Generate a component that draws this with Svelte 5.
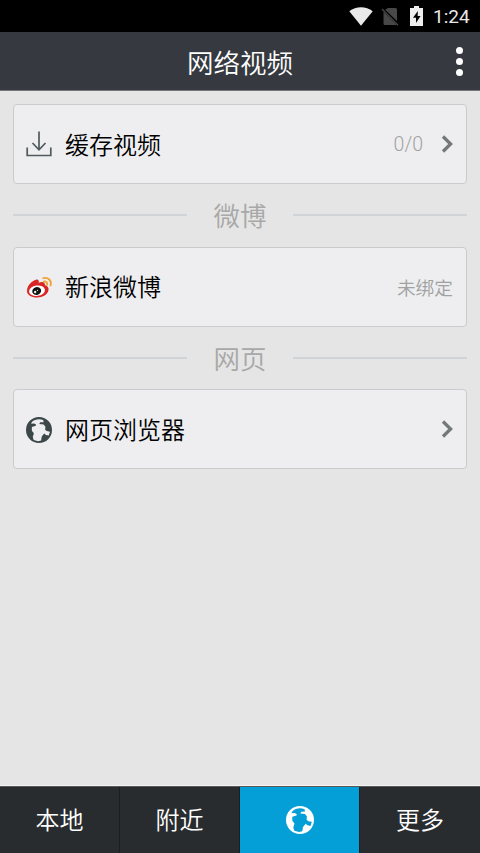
<script>
	const tabs = [
		{ id: "local", label: "本地" },
		{ id: "nearby", label: "附近" },
		{ id: "web", label: "" },
		{ id: "more", label: "更多" },
	];
	let active = $state("web");
</script>

{#snippet globe()}
	<svg class="globe" viewBox="0 0 28 28">
		<path
			fill="currentColor"
			fill-rule="evenodd"
			d="M14 0a14 14 0 1 0 0 28a14 14 0 1 0 0-28zM6.500 5.200C9 2.500 14.500 1.400 18.500 3.300L19 5.600L15.300 5.700L14.300 7.500L19 8L20.900 10.500L20.600 13.700L22.300 15.200L25.800 15.800L24.500 20L21.500 19.300L19.700 17.700L18.200 19.500L16.900 21.300L16.300 25.200L13 26L8.300 24.700L7.300 21.500L8.500 17.500L6.300 14.700L6.300 10.800L10.500 9.500L10.800 8.200L8.700 7L5.500 7.300z"
		/>
	</svg>
{/snippet}

{#snippet chevron()}
	<svg class="chevron" viewBox="0 0 12 18">
		<path d="M2 1.500l7.600 7.500L2 16.500" fill="none" stroke="#737879" stroke-width="3.300" />
	</svg>
{/snippet}

<div class="screen">
	<div class="status">
		<svg class="wifi" viewBox="0 0 24 19">
			<path d="M.3 4.200C7-1 17-1 23.700 4.200L12 18.700z" fill="#e9e9e9" />
		</svg>
		<svg class="sim" viewBox="0 0 18 19">
			<path d="M7 1h7.500q1.500 0 1.500 1.500V14L4.200 2.800zM2.500 4.700L15.700 18H4q-1.500 0-1.500-1.500z" fill="#484848" />
			<path d="M1 2l16 16.300" stroke="#484848" stroke-width="1.300" />
		</svg>
		<svg class="battery" viewBox="0 0 13 20">
			<path d="M4 0h5v2h4v18H0V2h4z" fill="#eee" />
			<path d="M7.800 5L3 11.700h3V17l4.600-7H7.700z" fill="#000" />
		</svg>
		<span class="clock">1:24</span>
	</div>

	<header>
		<h1>网络视频</h1>
		<button class="menu" aria-label="menu"><i></i><i></i><i></i></button>
	</header>

	<main>
		<div class="card">
			<svg class="icon" viewBox="0 0 26 26" fill="none" stroke="#4f5a5c" stroke-width="1.700">
				<path d="M13 0.500v18M6.500 12l6.500 6.800 6.500-6.800M1.200 16.500v8h23.600v-8" />
			</svg>
			<span class="name">缓存视频</span>
			<span class="count">0/0</span>
			{@render chevron()}
		</div>

		<div class="divider"><span>微博</span></div>

		<div class="card">
			<svg class="icon" viewBox="0 0 26 26">
				<path
					d="M1 17C1 11.500 6 6.700 10 5.700c2.500-.5 3.200 1 2.700 3 3-1.300 6.600-1.200 6.200 2.300 2.700 1 4.300 2.800 3.500 5.500C21.500 20.500 17 23.500 11 23.500 5.500 23.500 1 21 1 17z"
					fill="#d92525"
				/>
				<ellipse cx="11" cy="16.700" rx="8" ry="5.200" fill="#fff" transform="rotate(-7 11 16.700)" />
				<ellipse cx="10.700" cy="17" rx="4.500" ry="3.900" fill="#111" transform="rotate(-15 10.700 17)" />
				<circle cx="9.200" cy="18" r="1.200" fill="#eee" />
				<circle cx="11.500" cy="16.300" r=".6" fill="#eee" />
				<path
					d="M17.300 4.100c5-1.200 8.600 2.400 7.200 7.400M17.600 7.600c2.500-.5 4 1 3.400 3.200"
					fill="none"
					stroke="#eda334"
					stroke-width="1.900"
					stroke-linecap="round"
				/>
			</svg>
			<span class="name">新浪微博</span>
			<span class="state">未绑定</span>
		</div>

		<div class="divider"><span>网页</span></div>

		<div class="card">
			<span class="icon">{@render globe()}</span>
			<span class="name">网页浏览器</span>
			{@render chevron()}
		</div>
	</main>

	<nav>
		{#each tabs as tab (tab.id)}
			<button class:active={active === tab.id} aria-label={tab.id} onclick={() => (active = tab.id)}>
				{#if tab.id === "web"}
					{@render globe()}
				{:else}
					<span>{tab.label}</span>
				{/if}
			</button>
		{/each}
	</nav>
</div>

<style>
	.screen {
		height: 100vh;
		display: flex;
		flex-direction: column;
		background: #e5e5e5;
		font-family: Roboto, "Noto Sans CJK SC", sans-serif;
		font-weight: 350;
		overflow: hidden;
	}

	svg {
		display: block;
		flex: none;
	}

	button {
		border: 0;
		padding: 0;
		background: none;
		color: inherit;
		font: inherit;
	}

	.status {
		flex: none;
		height: 32px;
		box-sizing: border-box;
		padding-right: 11px;
		display: flex;
		align-items: center;
		justify-content: flex-end;
		background: #000;
		color: #e9e9e9;
	}

	.wifi {
		width: 24px;
		height: 19px;
		margin-right: 8px;
	}

	.sim {
		width: 18px;
		height: 19px;
		margin-right: 11px;
	}

	.battery {
		width: 13px;
		height: 20px;
		margin-right: 10px;
	}

	.clock {
		width: 36px;
		font-size: 19px;
		font-weight: 400;
		line-height: 32px;
		padding-top: 2px;
	}

	header {
		flex: none;
		height: 59px;
		box-sizing: border-box;
		display: grid;
		grid-template-columns: 40px 1fr 40px;
		align-items: center;
		background: #363a40;
		border-bottom: 1px solid #74777a;
		color: #fff;
	}

	h1 {
		grid-column: 2;
		margin: 0;
		padding-top: 5px;
		font-size: 26.5px;
		font-weight: inherit;
		line-height: 53px;
		text-align: center;
	}

	.menu {
		display: flex;
		flex-direction: column;
		align-items: center;
		gap: 4px;
		padding-right: 2px;
	}

	.menu i {
		width: 7px;
		height: 7px;
		border-radius: 50%;
		background: #fff;
	}

	main {
		flex: 1;
		padding: 13px 13px 0;
	}

	.card {
		height: 80px;
		box-sizing: border-box;
		padding: 0 13px 0 12px;
		display: flex;
		align-items: center;
		background: #eeeef0;
		border: 1px solid #c8cccf;
		border-radius: 4px;
	}

	.icon {
		width: 26px;
		height: 26px;
		margin-right: 13px;
		color: #3b4749;
	}

	.icon .globe {
		width: 26px;
		height: 26px;
		margin-top: 1px;
	}

	.name {
		flex: 1;
		padding-bottom: 2px;
		font-size: 24px;
		color: #000;
	}

	.count,
	.state {
		font-size: 18.700px;
		color: #a0a2a2;
	}

	.state {
		padding-bottom: 1px;
	}

	.count {
		font-weight: 300;
		font-size: 19.500px;
		margin-right: 18px;
	}

	.chevron {
		width: 12px;
		height: 18px;
	}

	.divider {
		height: 62.500px;
		display: flex;
		align-items: center;
		font-size: 26.500px;
		color: #a8a8a8;
	}

	.divider::before,
	.divider::after {
		content: "";
		flex: 1;
		height: 2px;
		background: #d0d4d6;
	}

	.divider span {
		width: 106px;
		padding-bottom: 1px;
		text-align: center;
	}

	nav {
		flex: none;
		height: 67px;
		box-sizing: border-box;
		display: grid;
		grid-template-columns: repeat(4, 1fr);
		background: #282c2f;
		border-top: 1px solid #55595b;
		box-shadow: 0 -1px #f3f3f3;
		color: #fff;
		font-size: 24px;
	}

	nav button {
		display: flex;
		align-items: center;
		justify-content: center;
		border-right: 1px solid #1c1f21;
	}

	nav button:last-child {
		border-right: 0;
	}

	nav span {
		padding-bottom: 3px;
	}

	nav .active {
		background: #039fd6;
	}

	nav .globe {
		width: 28px;
		height: 28px;
	}
</style>
